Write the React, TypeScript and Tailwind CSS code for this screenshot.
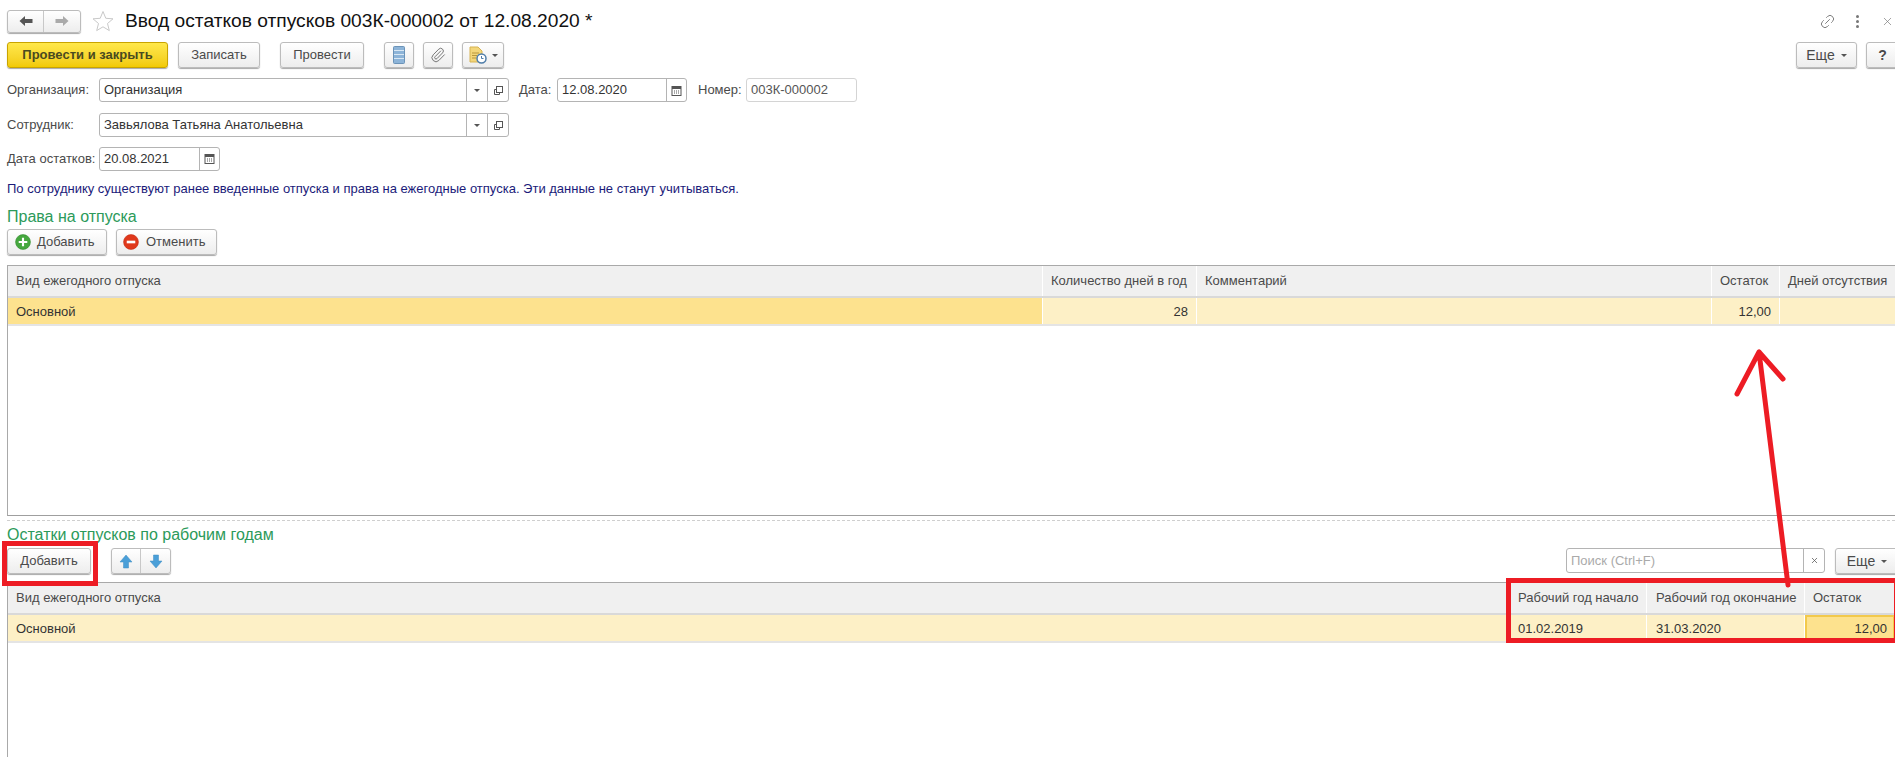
import type { ReactNode } from "react";
import { Paperclip, Link2, X } from "lucide-react";

const btn =
  "flex items-center justify-center rounded-[3px] border border-[#bcbcbc] bg-linear-to-b from-white to-[#ededed] shadow-[0_1px_1px_#a8a8a8] text-[#4a4a4a]";
const field = "flex items-stretch rounded-[3px] border border-[#b4b4b4] bg-white text-[#333]";

function Caret() {
  return <span className="h-0 w-0 border-x-[3px] border-t-[3px] border-x-transparent border-t-[#555]" />;
}

function OpenIcon() {
  return (
    <svg width="11" height="11" viewBox="0 0 11 11" fill="none" stroke="#555" strokeWidth="1">
      <rect x="3.5" y="1.5" width="6" height="6" />
      <path d="M3.5 4.5h-2v5h5v-2" />
    </svg>
  );
}

function CalendarIcon() {
  return (
    <svg width="11" height="11" viewBox="0 0 11 11">
      <rect x="1" y="1.5" width="9" height="9" fill="#fff" stroke="#555" />
      <rect x="1" y="1.5" width="9" height="2.5" fill="#555" />
      <path d="M3 5.5h1v1H3zM5 5.5h1v1H5zM7 5.5h1v1H7zM3 7.5h1v1H3zM5 7.5h1v1H5zM7 7.5h1v1H7z" fill="#555" />
    </svg>
  );
}

function Arrow({ dir, color }: { dir: "left" | "right"; color: string }) {
  return (
    <svg width="14" height="12" viewBox="0 0 14 12" className={dir === "right" ? "rotate-180" : ""}>
      <path d="M0.5 6 6 1v3h7.5v4H6v3z" fill={color} />
    </svg>
  );
}

function Vert({ dir }: { dir: "up" | "down" }) {
  return (
    <svg width="14" height="15" viewBox="0 0 14 15" className={dir === "down" ? "rotate-180" : ""}>
      <path d="M7 1 13 8H9.5v6h-5V8H1z" fill="#4a9fd8" stroke="#3f8cc2" strokeWidth="0.5" />
    </svg>
  );
}

function RefField({ value }: { value: string }) {
  return (
    <div className={`${field} h-[24px] w-[410px]`}>
      <span className="flex-1 pl-[4px] leading-[22px]">{value}</span>
      <span className="flex w-[21px] items-center justify-center border-l border-[#b4b4b4]">
        <Caret />
      </span>
      <span className="flex w-[21px] items-center justify-center border-l border-[#b4b4b4]">
        <OpenIcon />
      </span>
    </div>
  );
}

function DateField({ value, w }: { value: string; w: string }) {
  return (
    <div className={`${field} h-[24px] ${w}`}>
      <span className="flex-1 pl-[4px] leading-[22px]">{value}</span>
      <span className="flex w-[20px] items-center justify-center border-l border-[#b4b4b4]">
        <CalendarIcon />
      </span>
    </div>
  );
}

function Label({ children, w }: { children: ReactNode; w: string }) {
  return <span className={`${w} shrink-0 text-[#4a4a4a]`}>{children}</span>;
}

function Cell({ children, right, className = "" }: { children?: ReactNode; right?: boolean; className?: string }) {
  return (
    <div
      className={`flex items-center truncate border-r border-white px-[8px] last:border-r-0 ${
        right ? "justify-end" : ""
      } ${className}`}
    >
      {children}
    </div>
  );
}

export default function App() {
  return (
    <div className="relative h-[757px] w-[1895px] overflow-hidden bg-white font-['Liberation_Sans',Arial,sans-serif] text-[13px] text-[#333]">
      {/* заголовок */}
      <div className="mt-[9px] flex h-[24px] items-center pl-[7px]">
        <div className={`${btn} h-[23px] w-[74px]`}>
          <span className="flex h-full w-[37px] items-center justify-center border-r border-[#c8c8c8]">
            <Arrow dir="left" color="#555" />
          </span>
          <span className="flex h-full w-[37px] items-center justify-center">
            <Arrow dir="right" color="#aaa" />
          </span>
        </div>
        <svg className="ml-[11px]" width="22" height="22" viewBox="0 0 22 22" fill="none" stroke="#c9c9c9">
          <path d="M11 1.5 13.8 8.3 21 8.8 15.5 13.5 17.3 20.6 11 16.8 4.7 20.6 6.5 13.5 1 8.8 8.2 8.3z" />
        </svg>
        <h1 className="ml-[11px] text-[19.2px] leading-none text-[#111]">Ввод остатков отпусков 003К-000002 от 12.08.2020 *</h1>
        <div className="ml-auto flex items-center text-[#777]">
          <Link2 size={17} strokeWidth={1.25} className="-rotate-45" />
          <span className="ml-[20px] flex flex-col gap-[2px]">
            <i className="h-[3px] w-[3px] rounded-full bg-[#777]" />
            <i className="h-[3px] w-[3px] rounded-full bg-[#777]" />
            <i className="h-[3px] w-[3px] rounded-full bg-[#777]" />
          </span>
          <X size={13} strokeWidth={1.25} className="ml-[22px] mr-[1px]" />
        </div>
      </div>

      {/* панель команд */}
      <div className="mt-[9px] flex h-[26px] pl-[7px]">
        <button className="flex w-[161px] items-center justify-center rounded-[3px] border border-[#c9a400] bg-linear-to-b from-[#ffe84a] to-[#f2ca00] font-bold text-[#4a4a20] shadow-[0_1px_1px_#a8a8a8]">
          Провести и закрыть
        </button>
        <button className={`${btn} ml-[10px] w-[82px]`}>Записать</button>
        <button className={`${btn} ml-[20px] w-[84px]`}>Провести</button>
        <button className={`${btn} ml-[20px] w-[30px]`}>
          <svg width="12" height="18" viewBox="0 0 12 18">
            <rect x="0.5" y="0.5" width="11" height="17" rx="1" fill="#8db4d8" stroke="#6b93b8" />
            <path d="M1 4.5h10M1 8.5h10M1 12.5h10" stroke="#d9e8f4" />
          </svg>
        </button>
        <button className={`${btn} ml-[9px] w-[30px]`}>
          <Paperclip size={16} strokeWidth={1.5} className="text-[#777]" />
        </button>
        <button className={`${btn} ml-[9px] w-[42px] gap-[5px]`}>
          <svg width="18" height="18" viewBox="0 0 18 18">
            <path d="M1 1h8l4 4v11H1z" fill="#f3d67a" stroke="#d6b352" />
            <path d="M3 7h7M3 9.5h5M3 12h4" stroke="#b8963c" />
            <circle cx="12.5" cy="12.5" r="4.5" fill="#fff" stroke="#4d7ca8" strokeWidth="1.5" />
            <path d="M12.5 10v2.5h2" stroke="#4d7ca8" fill="none" />
          </svg>
          <Caret />
        </button>
        <button className={`${btn} ml-auto w-[61px] gap-[6px] text-[14px]`}>
          Еще <Caret />
        </button>
        <button className={`${btn} ml-[9px] -mr-[4px] w-[33px] text-[14px] font-bold`}>?</button>
      </div>

      {/* реквизиты */}
      <div className="mt-[10px] flex h-[24px] items-center pl-[7px]">
        <Label w="w-[92px]">Организация:</Label>
        <RefField value="Организация" />
        <Label w="ml-[10px] w-[38px]">Дата:</Label>
        <DateField value="12.08.2020" w="w-[130px]" />
        <Label w="ml-[11px] w-[48px]">Номер:</Label>
        <div className={`${field} h-[24px] w-[111px] border-[#d4d4d4] pl-[4px] leading-[22px] text-[#555]`}>003К-000002</div>
      </div>
      <div className="mt-[11px] flex h-[24px] items-center pl-[7px]">
        <Label w="w-[92px]">Сотрудник:</Label>
        <RefField value="Завьялова Татьяна Анатольевна" />
      </div>
      <div className="mt-[9px] flex h-[25px] items-center pl-[7px]">
        <Label w="w-[92px]">Дата остатков:</Label>
        <DateField value="20.08.2021" w="w-[121px]" />
      </div>
      <p className="mt-[11px] pl-[7px] leading-[14px] text-[#1b1b7a]">
        По сотруднику существуют ранее введенные отпуска и права на ежегодные отпуска. Эти данные не станут учитываться.
      </p>

      {/* права на отпуска */}
      <h2 className="mt-[11px] pl-[7px] text-[16px] leading-[20px] text-[#2c9a5a]">Права на отпуска</h2>
      <div className="mt-[2px] flex h-[26px] pl-[7px]">
        <button className={`${btn} w-[100px] justify-start gap-[6px] pl-[7px]`}>
          <svg width="16" height="16" viewBox="0 0 15 15">
            <circle cx="7.5" cy="7.5" r="7" fill="#46a83f" stroke="#2f8a2c" strokeWidth="0.5" />
            <path d="M7.5 3.5v8M3.5 7.5h8" stroke="#fff" strokeWidth="2" />
          </svg>
          Добавить
        </button>
        <button className={`${btn} ml-[9px] w-[101px] justify-start gap-[7px] pl-[6px]`}>
          <svg width="16" height="16" viewBox="0 0 15 15">
            <circle cx="7.5" cy="7.5" r="7" fill="#e0391c" stroke="#c22c12" strokeWidth="0.5" />
            <path d="M3.5 7.5h8" stroke="#fff" strokeWidth="2.5" />
          </svg>
          Отменить
        </button>
      </div>

      <div className="ml-[7px] mt-[10px] h-[251px] border border-r-0 border-[#a9a9a9] border-b-[#9f9f9f]">
        <div className="grid h-[32px] grid-cols-[1035px_154px_515px_68px_1fr] border-b-2 border-[#d9d9d9] bg-[#f0f0f0] text-[#4a4a4a]">
          <Cell className="border-[#dcdcdc]">Вид ежегодного отпуска</Cell>
          <Cell className="border-[#dcdcdc]">Количество дней в год</Cell>
          <Cell className="border-[#dcdcdc]">Комментарий</Cell>
          <Cell className="border-[#dcdcdc]">Остаток</Cell>
          <Cell>Дней отсутствия</Cell>
        </div>
        <div className="grid h-[28px] grid-cols-[1035px_154px_515px_68px_1fr] border-b-2 border-[#e4e4e4] bg-[#fdf0c6] [&>div]:pt-[2px]">
          <Cell className="bg-[#fde28e]">Основной</Cell>
          <Cell right>28</Cell>
          <Cell />
          <Cell right>12,00</Cell>
          <Cell />
        </div>
      </div>

      <div className="ml-[7px] mt-[4px] border-t border-dashed border-[#cfcfcf]" />

      {/* остатки */}
      <h2 className="mt-[4px] pl-[7px] text-[16px] leading-[20px] text-[#2c9a5a]">Остатки отпусков по рабочим годам</h2>
      <div className="mt-[3px] flex h-[26px] pl-[7px]">
        <button className={`${btn} w-[84px]`}>Добавить</button>
        <div className={`${btn} ml-[20px] w-[60px]`}>
          <span className="flex h-full w-[30px] items-center justify-center border-r border-[#c8c8c8]">
            <Vert dir="up" />
          </span>
          <span className="flex h-full w-[30px] items-center justify-center">
            <Vert dir="down" />
          </span>
        </div>
        <div className={`${field} ml-auto h-[25px] w-[259px]`}>
          <span className="flex-1 pl-[4px] leading-[23px] text-[#aaa]">Поиск (Ctrl+F)</span>
          <span className="flex w-[21px] items-center justify-center border-l border-[#b4b4b4]">
            <X size={9} className="text-[#555]" />
          </span>
        </div>
        <button className={`${btn} ml-[10px] -mr-[4px] w-[64px] gap-[6px] text-[14px]`}>
          Еще <Caret />
        </button>
      </div>

      <div className="ml-[7px] mt-[8px] h-[180px] border-l border-t border-[#a9a9a9]">
        <div className="grid h-[32px] grid-cols-[1501px_138px_158px_1fr] border-b-2 border-[#d9d9d9] bg-[#f0f0f0] text-[#4a4a4a]">
          <Cell className="border-[#dcdcdc]">Вид ежегодного отпуска</Cell>
          <Cell className="border-[#dcdcdc] pl-[9px]">Рабочий год начало</Cell>
          <Cell className="border-[#dcdcdc] pl-[9px]">Рабочий год окончание</Cell>
          <Cell>Остаток</Cell>
        </div>
        <div className="grid h-[28px] grid-cols-[1501px_138px_158px_1fr] border-b-2 border-[#e4e4e4] bg-[#fdf0c6] [&>div]:pt-[2px]">
          <Cell>Основной</Cell>
          <Cell className="pl-[9px]">01.02.2019</Cell>
          <Cell className="pl-[9px]">31.03.2020</Cell>
          <div className="flex items-center justify-end border-2 border-[#f2c94c] bg-[#fde28e] px-[6px]">12,00</div>
        </div>
      </div>

      {/* красные пометки поверх формы */}
      <div className="absolute left-[2px] top-[541px] h-[45px] w-[96px] border-[5px] border-[#ed1c24]" />
      <div className="absolute left-[1506px] top-[578px] h-[65px] w-[393px] border-[5px] border-[#ed1c24]" />
      <svg className="absolute left-[1725px] top-[345px]" width="75" height="245" viewBox="0 0 75 245" fill="none" stroke="#ed1c24" strokeWidth="5" strokeLinecap="round">
        <path d="M34 7 63 240M34 7 12 49M34 7 58 34" />
      </svg>
    </div>
  );
}
